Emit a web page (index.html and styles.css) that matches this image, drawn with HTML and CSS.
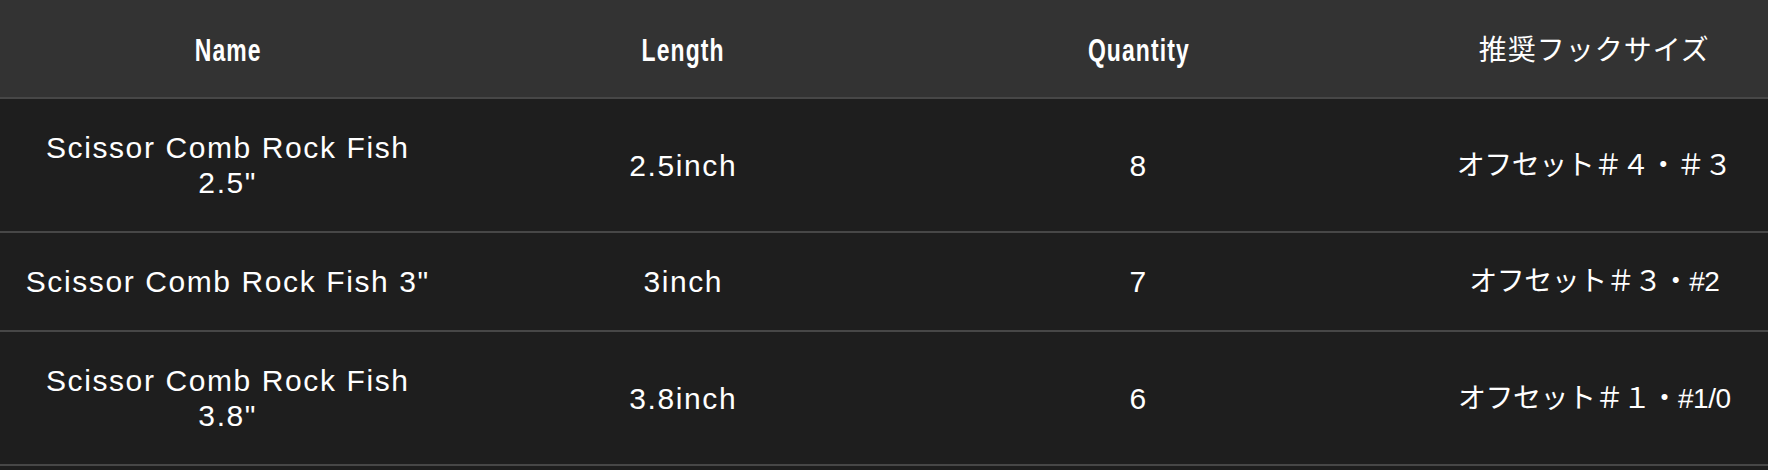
FILE: index.html
```html
<!DOCTYPE html>
<html lang="ja">
<head>
<meta charset="utf-8">
<title>Scissor Comb Rock Fish</title>
<link rel="stylesheet" href="styles.css">
</head>
<body>
<div class="spec-wrap">
  <table class="spec">
    <thead>
      <tr>
        <th><span class="cond">Name</span></th>
        <th><span class="cond">Length</span></th>
        <th><span class="cond">Quantity</span></th>
        <th class="jp">推奨フックサイズ</th>
      </tr>
    </thead>
    <tbody>
      <tr>
        <td>Scissor Comb Rock Fish 2.5"</td>
        <td>2.5inch</td>
        <td>8</td>
        <td class="jp">オフセット＃４・＃３</td>
      </tr>
      <tr>
        <td>Scissor Comb Rock Fish 3"</td>
        <td>3inch</td>
        <td>7</td>
        <td class="jp">オフセット＃３・#2</td>
      </tr>
      <tr>
        <td>Scissor Comb Rock Fish 3.8"</td>
        <td>3.8inch</td>
        <td>6</td>
        <td class="jp">オフセット＃１・#1/0</td>
      </tr>
    </tbody>
  </table>
</div>
</body>
</html>
```
FILE: styles.css
```css
html, body {
  margin: 0;
  padding: 0;
  background: #1e1e1e;
}

.spec-wrap {
  width: 100%;
  overflow: hidden;
}

.spec {
  width: 1822px;
  border-collapse: collapse;
  table-layout: fixed;
  color: #ffffff;
  font-family: "Liberation Sans", Arial, "Noto Sans CJK JP", sans-serif;
}

.spec th,
.spec td {
  width: 25%;
  text-align: center;
  vertical-align: middle;
  padding: 31px 18px;
  line-height: 35px;
  border-bottom: 2px solid #474747;
}

.spec thead tr {
  background: #333333;
}

.spec tbody tr {
  background: #1e1e1e;
}

.spec th {
  font-family: "Liberation Sans", Arial, sans-serif;
  font-weight: 700;
  font-size: 31px;
  letter-spacing: 1.5px;
}

.cond {
  display: inline-block;
  transform: translateY(2px) scaleX(0.74) scaleY(1.04);
}

.spec th.jp {
  font-family: "Noto Sans CJK JP", sans-serif;
  font-weight: 400;
  font-size: 28px;
  letter-spacing: 1px;
}

.spec td {
  font-size: 30px;
  letter-spacing: 1.6px;
}

.spec td.jp {
  font-family: "Liberation Sans", "Noto Sans CJK JP", sans-serif;
  font-size: 28px;
  letter-spacing: -0.5px;
}
```
